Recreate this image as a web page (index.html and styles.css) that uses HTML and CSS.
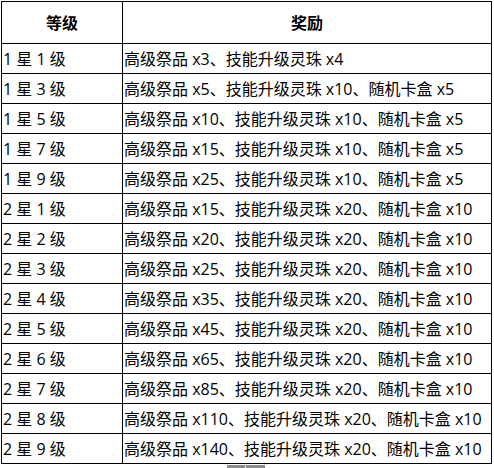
FILE: index.html
```html
<!DOCTYPE html>
<html lang="zh">
<head>
<meta charset="utf-8">
<link rel="stylesheet" href="styles.css">
</head>
<body>
<table class="rewards">
<colgroup><col class="c-level"><col class="c-reward"></colgroup>
<thead>
<tr><th>等级</th><th>奖励</th></tr>
</thead>
<tbody>
<tr><td>1 星 1 级</td><td>高级祭品 x3、技能升级灵珠 x4</td></tr>
<tr><td>1 星 3 级</td><td>高级祭品 x5、技能升级灵珠 x10、随机卡盒 x5</td></tr>
<tr><td>1 星 5 级</td><td>高级祭品 x10、技能升级灵珠 x10、随机卡盒 x5</td></tr>
<tr><td>1 星 7 级</td><td>高级祭品 x15、技能升级灵珠 x10、随机卡盒 x5</td></tr>
<tr><td>1 星 9 级</td><td>高级祭品 x25、技能升级灵珠 x10、随机卡盒 x5</td></tr>
<tr><td>2 星 1 级</td><td>高级祭品 x15、技能升级灵珠 x20、随机卡盒 x10</td></tr>
<tr><td>2 星 2 级</td><td>高级祭品 x20、技能升级灵珠 x20、随机卡盒 x10</td></tr>
<tr><td>2 星 3 级</td><td>高级祭品 x25、技能升级灵珠 x20、随机卡盒 x10</td></tr>
<tr><td>2 星 4 级</td><td>高级祭品 x35、技能升级灵珠 x20、随机卡盒 x10</td></tr>
<tr><td>2 星 5 级</td><td>高级祭品 x45、技能升级灵珠 x20、随机卡盒 x10</td></tr>
<tr><td>2 星 6 级</td><td>高级祭品 x65、技能升级灵珠 x20、随机卡盒 x10</td></tr>
<tr><td>2 星 7 级</td><td>高级祭品 x85、技能升级灵珠 x20、随机卡盒 x10</td></tr>
<tr><td>2 星 8 级</td><td>高级祭品 x110、技能升级灵珠 x20、随机卡盒 x10</td></tr>
<tr><td>2 星 9 级</td><td>高级祭品 x140、技能升级灵珠 x20、随机卡盒 x10</td></tr>
</tbody>
</table>
<div class="handle"><span class="notch"></span></div>
</body>
</html>
```
FILE: styles.css
```css
html, body {
  margin: 0;
  padding: 0;
  background: #fff;
}
body {
  padding: 1px 0 0 1px;
  font-family: "Open Sans", "Noto Sans CJK SC", sans-serif;
  font-size: 16px;
  color: #000;
}
.rewards {
  border-collapse: collapse;
  table-layout: fixed;
  width: 490px;
}
.c-level { width: 121px; }
.c-reward { width: 369px; }
.rewards th,
.rewards td {
  border: 1px solid #000;
  padding: 0 0 0 1px;
  line-height: 20px;
  white-space: nowrap;
  overflow: hidden;
  text-align: left;
  vertical-align: middle;
}
.rewards th {
  height: 41px;
  text-align: center;
  font-weight: bold;
  padding: 0;
}
.rewards td {
  height: 29px;
}
.handle {
  position: relative;
  width: 38px;
  height: 3px;
  margin: 1px 0 0 226px;
  background: #8c8c8c;
}
.notch {
  position: absolute;
  left: 18px;
  top: 0;
  width: 1px;
  height: 3px;
  background: #e0e0e0;
}
```
